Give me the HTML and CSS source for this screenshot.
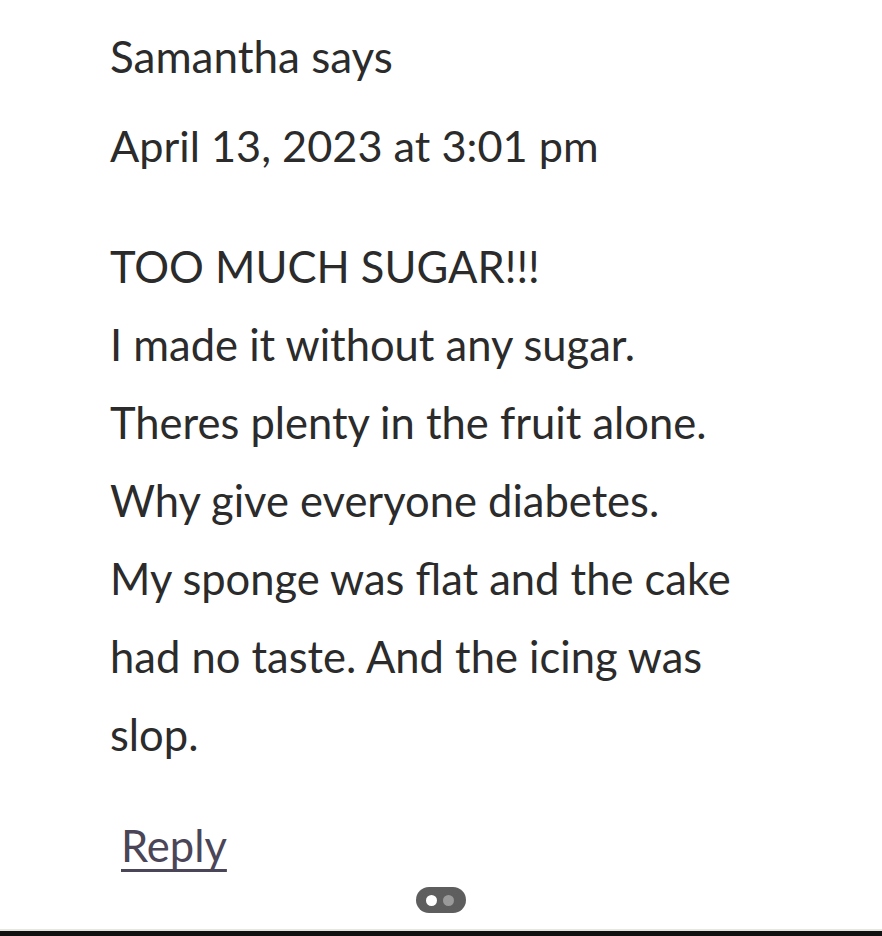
FILE: index.html
```html
<!DOCTYPE html>
<html>
<head>
<meta charset="utf-8">
<link rel="stylesheet" href="styles.css">
</head>
<body>
<div class="page">
  <article class="comment">
    <header class="meta">
      <div class="author">Samantha says</div>
      <div class="date">April 13, 2023 at 3:01 pm</div>
    </header>
    <div class="content">
      <p>TOO MUCH SUGAR!!!<br>I made it without any sugar.<br>Theres plenty in the fruit alone.<br>Why give everyone diabetes.<br>My sponge was flat and the cake had no taste. And the icing was slop.</p>
    </div>
    <div class="actions"><a class="reply" href="#">Reply</a></div>
  </article>
  <div class="pill"><span class="dot on"></span><span class="dot off"></span></div>
</div>
<div class="navbar"></div>
</body>
</html>
```
FILE: styles.css
```css
html, body {
  margin: 0;
  padding: 0;
  background: #fff;
}
body {
  width: 882px;
  height: 936px;
  overflow: hidden;
  display: flex;
  flex-direction: column;
  font-family: Lato, "Liberation Sans", sans-serif;
  color: #2b2b2b;
}
.page {
  flex: 1;
  padding: 30px 0 0 110px;
  position: relative;
}
.comment {
  width: 640px;
}
.author, .date {
  font-size: 44px;
  line-height: 52px;
}
.date {
  margin-top: 37px;
  font-size: 43.3px;
}
.content p {
  margin: 56px 0 0;
  font-size: 43.5px;
  line-height: 78px;
}
.actions {
  margin-top: 47px;
  padding-left: 11px;
}
.reply {
  font-size: 43.5px;
  line-height: 50px;
  color: #4b4558;
  text-decoration: underline;
  text-decoration-thickness: 3px;
  text-underline-offset: 7px;
}
.pill {
  position: absolute;
  left: 416px;
  top: 887px;
  width: 50px;
  height: 26px;
  border-radius: 13px;
  background: #5e5e5e;
  display: flex;
  align-items: center;
  gap: 6px;
  padding-left: 10px;
  box-sizing: border-box;
}
.dot {
  width: 11px;
  height: 11px;
  border-radius: 50%;
}
.dot.on { background: #fff; }
.dot.off { background: #9a9a9a; }
.navbar {
  height: 5px;
  background: #111;
  border-top: 2px solid #e8e6e0;
}
```
